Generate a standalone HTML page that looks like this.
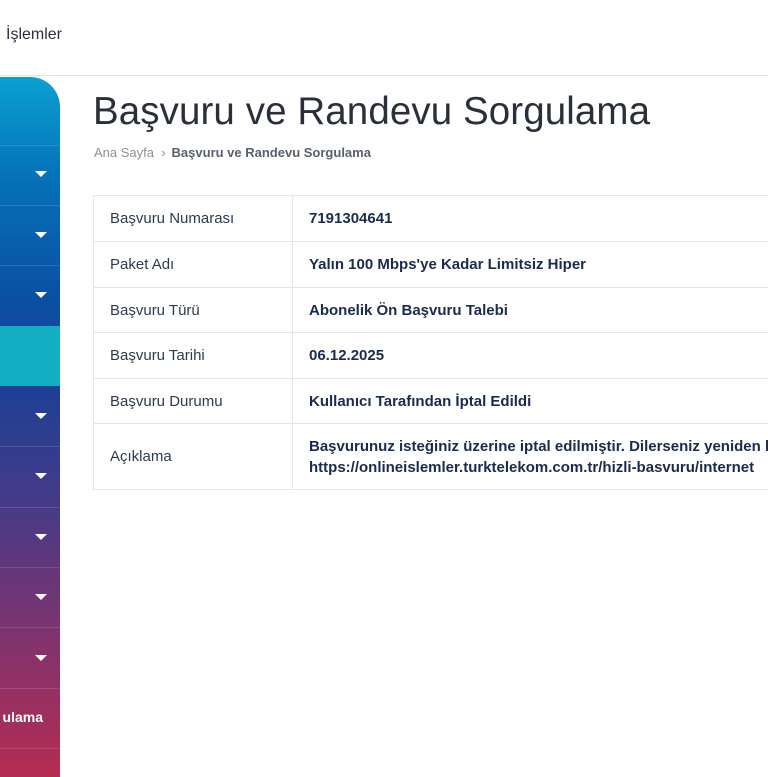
<!DOCTYPE html>
<html><head><meta charset="utf-8"><style>
*{margin:0;padding:0;box-sizing:border-box}
body{width:768px;height:768px;overflow:hidden;background:#fff;font-family:"Liberation Sans",sans-serif;position:relative}
.top{position:absolute;left:6px;top:26px;font-size:16px;color:#2a3140}
.hl{position:absolute;left:0;top:75px;width:768px;height:1px;background:#e4e4e4}
.side{position:absolute;left:0;top:77px;width:60px;height:700px;border-top-right-radius:30px;overflow:hidden;
background:linear-gradient(180deg,#0aa0d2 0%,#0670b6 15%,#0b4fa2 32%,#1f3f94 45%,#483a86 62%,#7a3470 78%,#b52c52 100%)}
.row{position:absolute;left:0;width:60px;border-top:1px solid rgba(255,255,255,.13)}
.ar{position:absolute;left:35px;width:0;height:0;border-left:6px solid transparent;border-right:6px solid transparent;border-top:6px solid #fff}
h1{position:absolute;left:93px;top:90px;font-size:38.5px;font-weight:400;color:#2a2f3a;letter-spacing:.1px}
.bc{position:absolute;left:94px;top:145px;font-size:13px;color:#8a8f99}
.bc b{color:#5a606b;margin-left:6px}
table{position:absolute;left:93px;top:195px;border-collapse:collapse;width:720px}
td{border:1px solid #e6e6e6;font-size:15px;padding:0 16px;color:#2d3a4f;height:46px}
td:first-child{width:199px}
td:last-child{font-weight:bold;color:#1b2b4c;white-space:nowrap}
tr.s td{height:45px}
</style></head><body>
<div class="top">İşlemler</div>
<div class="hl"></div>
<div class="side">
<div class="row" style="top:68px"></div><div class="ar" style="top:94px"></div>
<div class="row" style="top:128px"></div><div class="ar" style="top:155px"></div>
<div class="row" style="top:188px"></div><div class="ar" style="top:215px"></div>
<div style="position:absolute;top:249px;left:0;width:60px;height:60px;background:#12afc3"></div>
<div class="ar" style="top:336px"></div>
<div class="row" style="top:369px"></div><div class="ar" style="top:396px"></div>
<div class="row" style="top:430px"></div><div class="ar" style="top:457px"></div>
<div class="row" style="top:490px"></div><div class="ar" style="top:517px"></div>
<div class="row" style="top:550px"></div><div class="ar" style="top:578px"></div>
<div class="row" style="top:611px"></div>
<div style="position:absolute;top:632px;right:17px;color:#fff;font-weight:bold;font-size:14px">ulama</div>
<div class="row" style="top:671px"></div>
</div>
<h1>Başvuru ve Randevu Sorgulama</h1>
<div class="bc">Ana Sayfa &nbsp;›<b>Başvuru ve Randevu Sorgulama</b></div>
<table>
<tr><td>Başvuru Numarası</td><td>7191304641</td></tr>
<tr><td>Paket Adı</td><td>Yalın 100 Mbps'ye Kadar Limitsiz Hiper</td></tr>
<tr class="s"><td>Başvuru Türü</td><td>Abonelik Ön Başvuru Talebi</td></tr>
<tr><td>Başvuru Tarihi</td><td>06.12.2025</td></tr>
<tr class="s"><td>Başvuru Durumu</td><td>Kullanıcı Tarafından İptal Edildi</td></tr>
<tr><td style="height:66px">Açıklama</td><td style="line-height:21px">Başvurunuz isteğiniz üzerine iptal edilmiştir. Dilerseniz yeniden ba<br>https://onlineislemler.turktelekom.com.tr/hizli-basvuru/internet</td></tr>
</table>
</body></html>
